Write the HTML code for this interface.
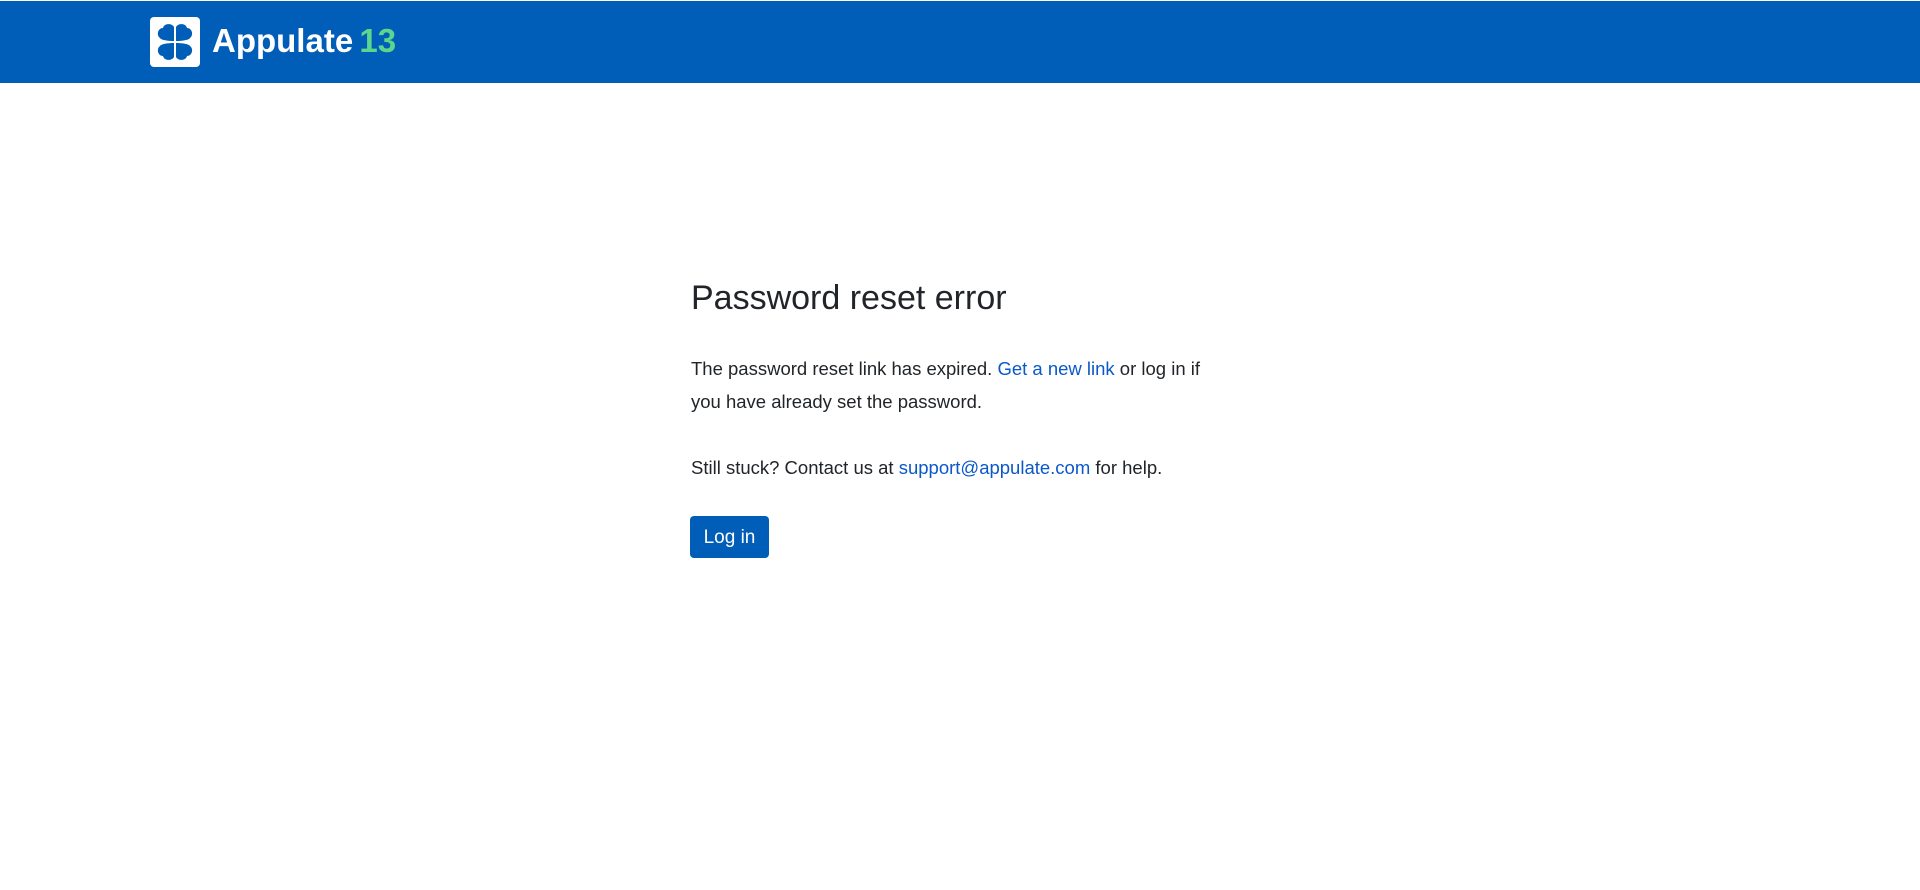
<!DOCTYPE html>
<html><head><meta charset="utf-8"><style>
body{margin:0;background:#fff;font-family:"Liberation Sans",sans-serif;color:#212529;}
.hdr{position:absolute;left:0;top:1px;width:1920px;height:82px;background:#005eb8;}
.logo{position:absolute;left:150px;top:16px;width:50px;height:50px;background:#fff;border-radius:4px;}
.brand{position:absolute;left:212px;top:15px;font-size:33px;font-weight:700;color:#fff;letter-spacing:0px;line-height:50px;}
.brand span{color:#5bd68d;margin-left:-3px;}
.main{position:absolute;left:691px;top:273px;width:520px;}
h1{margin:0;font-weight:400;font-size:34px;line-height:50px;}
p{margin:0;font-size:18.5px;line-height:33px;}
a{color:#0a58ca;text-decoration:none;}
.btn{position:absolute;left:-1px;top:243px;width:79px;height:42px;background:#005eb8;border-radius:4px;color:#fff;font-size:19px;line-height:43px;text-align:center;}
</style></head><body>
<div class="hdr">
<div class="logo"><svg width="50" height="50" viewBox="0 0 50 50"><g fill="#005eb8">
<path d="M24 24 L24 10 C22 6 14 6 13 11 C8 11 6 18 10 21 C11 23 18 24 24 24Z"/>
<path d="M26 24 L26 10 C28 6 36 6 37 11 C42 11 44 18 40 21 C39 23 32 24 26 24Z"/>
<path d="M24 26 L24 40 C22 44 14 44 13 39 C8 39 6 32 10 29 C11 27 18 26 24 26Z"/>
<path d="M26 26 L26 40 C28 44 36 44 37 39 C42 39 44 32 40 29 C39 27 32 26 26 26Z"/>
</g></svg></div>
<div class="brand">Appulate <span>13</span></div>
</div>
<div class="main">
<h1>Password reset error</h1>
<p style="margin-top:29px">The password reset link has expired. <a>Get a new link</a> or log in if you have already set the password.</p>
<p style="margin-top:33px">Still stuck? Contact us at <a>support@appulate.com</a> for help.</p>
<div class="btn">Log in</div>
</div>
</body></html>
